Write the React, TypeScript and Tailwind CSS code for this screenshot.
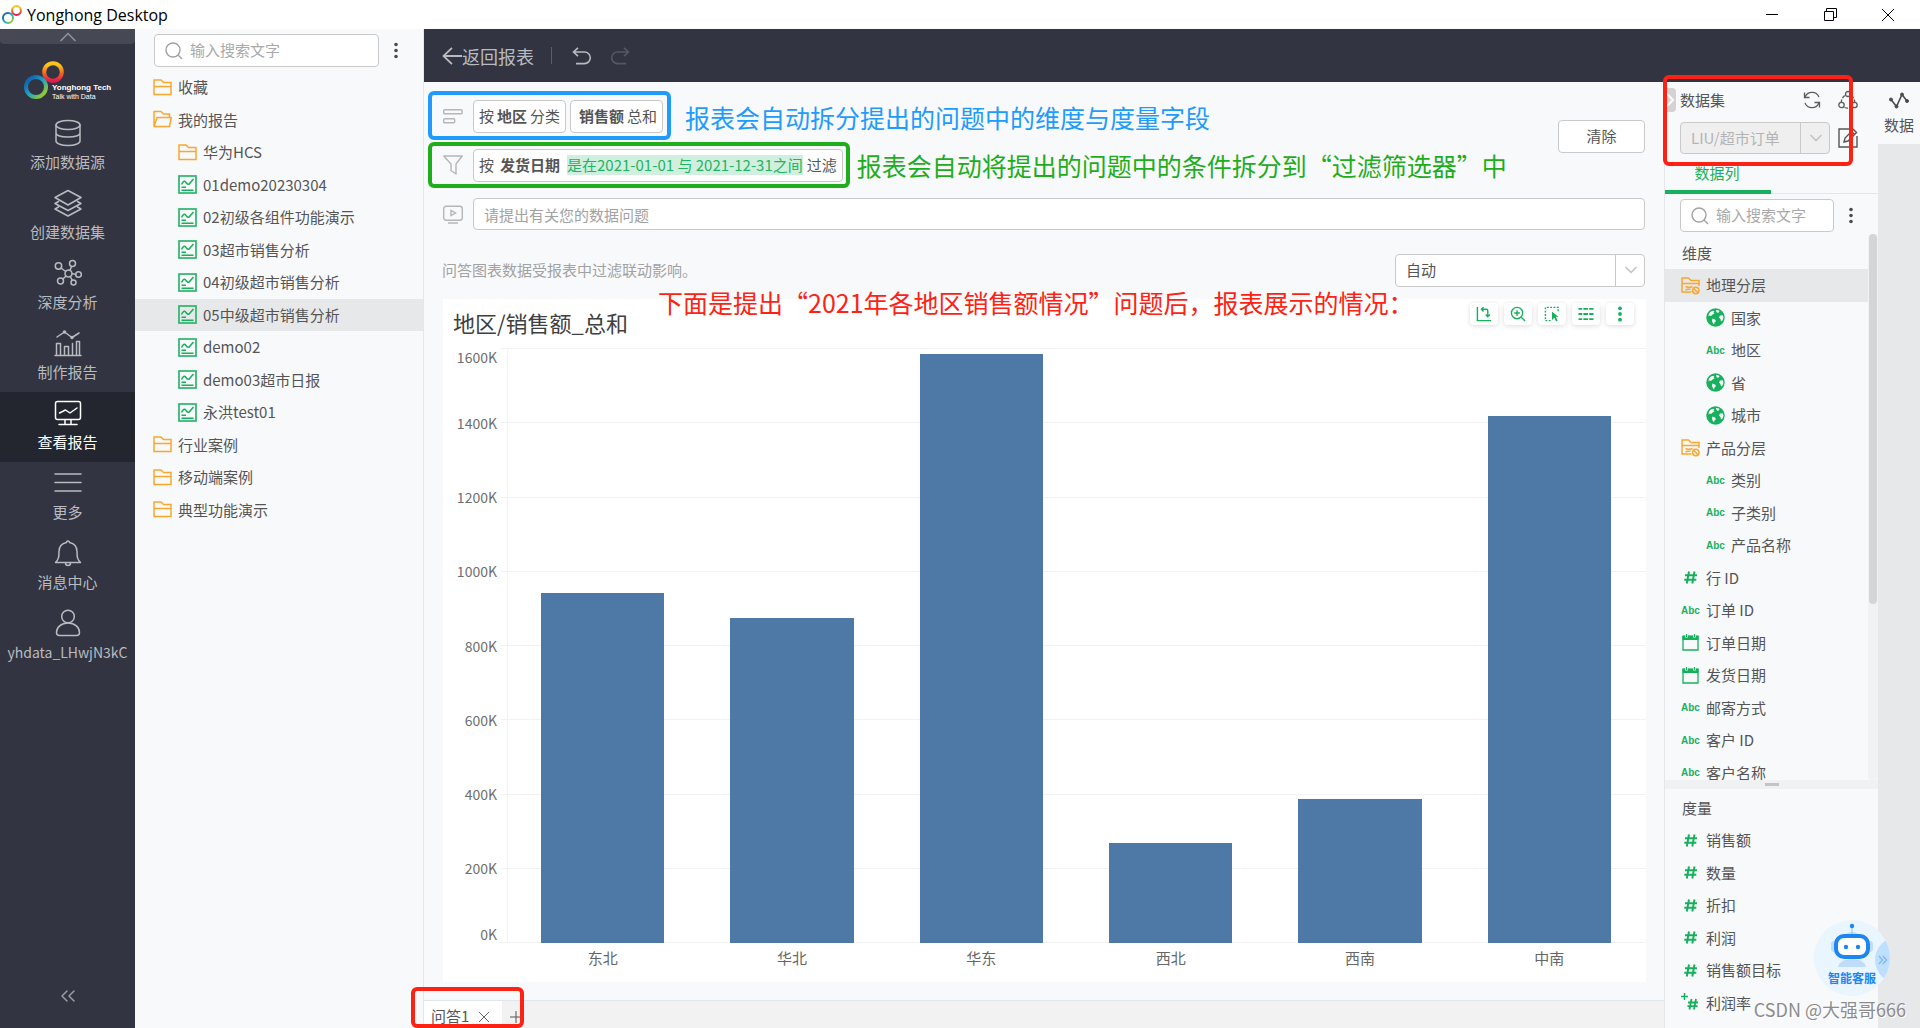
import type { ReactNode } from "react";
import { ChevronDown, ChevronsLeft, ChevronUp } from "lucide-react";

type Kind = "folder" | "folder-open" | "report" | "level" | "globe" | "abc" | "number" | "date" | "calc";

type Item = { label: string; kind: Kind; child?: boolean; active?: boolean };

const REPORTS: Item[] = [
  { label: "收藏", kind: "folder" },
  { label: "我的报告", kind: "folder-open" },
  { label: "华为HCS", kind: "folder", child: true },
  { label: "01demo20230304", kind: "report", child: true },
  { label: "02初级各组件功能演示", kind: "report", child: true },
  { label: "03超市销售分析", kind: "report", child: true },
  { label: "04初级超市销售分析", kind: "report", child: true },
  { label: "05中级超市销售分析", kind: "report", child: true, active: true },
  { label: "demo02", kind: "report", child: true },
  { label: "demo03超市日报", kind: "report", child: true },
  { label: "永洪test01", kind: "report", child: true },
  { label: "行业案例", kind: "folder" },
  { label: "移动端案例", kind: "folder" },
  { label: "典型功能演示", kind: "folder" },
];

const DIMENSIONS: Item[] = [
  { label: "地理分层", kind: "level", active: true },
  { label: "国家", kind: "globe", child: true },
  { label: "地区", kind: "abc", child: true },
  { label: "省", kind: "globe", child: true },
  { label: "城市", kind: "globe", child: true },
  { label: "产品分层", kind: "level" },
  { label: "类别", kind: "abc", child: true },
  { label: "子类别", kind: "abc", child: true },
  { label: "产品名称", kind: "abc", child: true },
  { label: "行 ID", kind: "number" },
  { label: "订单 ID", kind: "abc" },
  { label: "订单日期", kind: "date" },
  { label: "发货日期", kind: "date" },
  { label: "邮寄方式", kind: "abc" },
  { label: "客户 ID", kind: "abc" },
  { label: "客户名称", kind: "abc" },
];

const MEASURES: Item[] = [
  { label: "销售额", kind: "number" },
  { label: "数量", kind: "number" },
  { label: "折扣", kind: "number" },
  { label: "利润", kind: "number" },
  { label: "销售额目标", kind: "number" },
  { label: "利润率", kind: "calc" },
];

// sales per region, in thousands
const SALES = [
  { region: "东北", value: 942 },
  { region: "华北", value: 875 },
  { region: "华东", value: 1584 },
  { region: "西北", value: 270 },
  { region: "西南", value: 386 },
  { region: "中南", value: 1417 },
];
const AXIS_MAX = 1600;
const TICKS = [1600, 1400, 1200, 1000, 800, 600, 400, 200, 0];

function NavSvg({ children }: { children: ReactNode }) {
  return (
    <svg viewBox="0 0 28 28" className="w-7 h-7" fill="none" stroke="currentColor" strokeWidth="1.5" strokeLinejoin="round" strokeLinecap="round">
      {children}
    </svg>
  );
}

const NAV: { label: string; small?: boolean; active?: boolean; icon: ReactNode }[] = [
  {
    label: "添加数据源",
    icon: (
      <>
        <ellipse cx="14" cy="6" rx="12" ry="4.5" />
        <path d="M2 6v16c0 2.5 5.4 4.5 12 4.5s12-2 12-4.5V6M2 14c0 2.5 5.4 4 12 4s12-1.5 12-4" />
      </>
    ),
  },
  {
    label: "创建数据集",
    icon: (
      <path d="M14 1.5 27 8.500 14 16 1 8.500ZM4.500 12.500 1 14.500 14 21.500 27 14.500 23.500 12.500M4.500 18 1 20 14 27 27 20 23.500 18" />
    ),
  },
  {
    label: "深度分析",
    icon: (
      <>
        <circle cx="14.5" cy="14.5" r="3.5" />
        <circle cx="4.5" cy="7" r="3.2" />
        <circle cx="18.5" cy="4.5" r="3" />
        <circle cx="24.5" cy="15.5" r="2.8" />
        <circle cx="6.5" cy="22" r="3" />
        <circle cx="19.5" cy="23.5" r="2.5" />
        <path d="m7 9 4.7 3.5M17.5 7.500l-1.500 4M18 14.700l3.700.5M9 20l3-3M18.300 21.300l-2-3.800" />
      </>
    ),
  },
  {
    label: "制作报告",
    icon: (
      <>
        <path d="M1 26.500h26M2.500 26V14.500h4V26M10.500 26V17.500h4V26M18.500 26V14.500M22.500 26V12.500h3V26" />
        <path d="m3 8 7.500-5L18 8.500 25 4" />
        <circle cx="10.5" cy="3" r="1" />
        <circle cx="18" cy="8.5" r="1" />
      </>
    ),
  },
  {
    label: "查看报告",
    active: true,
    icon: (
      <>
        <rect x="1.5" y="2.5" width="25" height="18" rx="2" />
        <path d="m5.500 14 6-3 4.500 3 7-5M11 21v4M17 21v4M5 25.500h18" />
      </>
    ),
  },
  { label: "更多", icon: <path d="M1 5h26M1 13.500h26M1 22h26" /> },
  {
    label: "消息中心",
    icon: (
      <path d="M12.500 3.500a1.500 1.500 0 0 1 3 0c4.500 1 7.500 4.500 7.500 9 0 6 .5 8 3.500 11h-25C4.500 20.500 5 18.500 5 12.500c0-4.500 3-8 7.500-9ZM11.500 24a2.500 2.500 0 0 0 5 0" />
    ),
  },
  {
    label: "yhdata_LHwjN3kC",
    small: true,
    icon: (
      <>
        <circle cx="14" cy="7.5" r="6.3" />
        <path d="M2.500 23.500c0-5 4.500-9.500 11.500-9.500s11.500 4.500 11.500 9.500c0 2-1 3-3 3h-17c-2 0-3-1-3-3Z" />
      </>
    ),
  },
];

function KindIcon({ kind }: { kind: Kind }) {
  if (kind === "abc") {
    return <span className="w-[19px] shrink-0 font-[Liberation_Sans] text-[10px] font-bold text-[#17b05d]">Abc</span>;
  }
  return (
    <svg viewBox="0 0 19 19" className="w-[19px] h-[19px] shrink-0" fill="none" strokeWidth="1.5">
      {kind === "folder" && <path stroke="#fba62e" d="M1 16.500V2h7l2.500 2.500H18v12ZM1 8.500h17" />}
      {kind === "folder-open" && (
        <path stroke="#fba62e" strokeLinejoin="round" d="M1 16.500V1.500h7L10.500 4H16.500v3.500M1 16.500 4 7.500h14.200L16.500 16.500Z" />
      )}
      {kind === "report" && (
        <>
          <rect x="1" y="1" width="17" height="17" stroke="#2cb56b" strokeWidth="1.7" />
          <path stroke="#17b05d" d="M3.500 9.500C5 6 6.500 5.500 8 7.500s2.800 2.500 4 .5L15.500 4M3.500 12.300H8M3.500 15.200h12" />
        </>
      )}
      {kind === "level" && (
        <>
          <path stroke="#fba62e" d="M10.500 16H1V2h6.500l2.500 2.500h8V10M1 7.500h17M4.500 10.500l2 .8h3l2-.8M4.500 14l2-.8h3" />
          <circle cx="14.8" cy="14.5" r="3.2" stroke="#fba62e" />
          <path stroke="#fba62e" d="m12.500 12.300 4.500 4.500" />
        </>
      )}
      {kind === "globe" && (
        <>
          <circle cx="9.5" cy="9.5" r="9.2" fill="#17b05d" />
          <path
            fill="#f8f9fb"
            d="M4.500 3.800 7 2.800 8.500 3.300 7.500 4.500 8.500 5.500 6.500 6.500 5 8 3.500 7.500 2.500 8.500 2.800 6ZM10 2 12.500 2.300 13.500 3.500 12 5 10.500 4ZM6.500 10.500 9 11.500 10 13 8.500 14.500 8 16.500 6.500 14.500 6 12.500ZM14 7.500 16.800 7.200 17.500 9.500 16.500 12.500 15 13.500 14.500 11 13 9.500Z"
          />
        </>
      )}
      {kind === "number" && (
        <path stroke="#17b05d" strokeWidth="2" d="M8 3.500 5.800 15.500M13.500 3.500l-2.200 12M4 7.200h12M3.300 11.800h12" />
      )}
      {kind === "date" && (
        <>
          <path stroke="#17b05d" strokeWidth="1.3" d="M2 3.500h15V17H2Z" />
          <path fill="#17b05d" d="M1.500 2.500h16V7h-16Z" />
          <path stroke="#f8f9fb" strokeWidth="2.6" d="M5.500 1v3.500M13.500 1v3.500" />
          <path stroke="#17b05d" strokeWidth="1.2" d="M5.500 1v3M13.500 1v3" />
        </>
      )}
      {kind === "calc" && (
        <>
          <path stroke="#17b05d" d="M3.500 0v7M0 3.500h7" />
          <path stroke="#17b05d" strokeWidth="1.8" d="M10.500 6 8.500 16.500M15 6l-2 10.500M7 9.500h10M6.500 13.200h10" />
        </>
      )}
    </svg>
  );
}

// The left padding comes from the list, so both side panels can share the row.
function Row({ item, indent }: { item: Item; indent: string }) {
  return (
    <li className={item.active ? "bg-[#e7e8ea]" : ""}>
      <a href="#" className={`flex h-full items-center whitespace-nowrap ${indent}`}>
        {item.child && <span className="w-[25px]" />}
        <KindIcon kind={item.kind} />
        <span className="ml-[6px]">{item.label}</span>
      </a>
    </li>
  );
}

function SearchBox({ className }: { className: string }) {
  return (
    <label className={`flex h-[33px] items-center gap-[7px] rounded-sm border border-[#c9c9c9] bg-white pl-[10px] ${className}`}>
      <svg viewBox="0 0 18 18" className="w-[18px] h-[18px] shrink-0" fill="none" stroke="#a2a2a2" strokeWidth="1.4">
        <circle cx="8" cy="8" r="7" />
        <path d="m13 13 4 4" />
      </svg>
      <input aria-label="搜索" placeholder="输入搜索文字" className="w-full min-w-0 bg-transparent outline-none placeholder:text-[#a9a9a9]" />
    </label>
  );
}

function MoreDots() {
  return (
    <button aria-label="更多操作" className="flex w-4 shrink-0 justify-center">
      <svg viewBox="0 0 4 17" className="w-1 h-[17px]" fill="#4c4c4c">
        <circle cx="2" cy="2.5" r="1.8" />
        <circle cx="2" cy="8.5" r="1.8" />
        <circle cx="2" cy="14.5" r="1.8" />
      </svg>
    </button>
  );
}

function SelectArrow() {
  return (
    <span className="pointer-events-none absolute inset-y-0 right-0 flex w-[30px] items-center justify-center border-l border-[#c9c9c9] text-[#c4c4c4]">
      <ChevronDown className="h-5 w-5" strokeWidth={2} />
    </span>
  );
}

function Rings({ id, className }: { id: string; className: string }) {
  return (
    <svg viewBox="0 0 40 40" className={className} fill="none">
      <defs>
        <linearGradient id={`${id}-cool`} x1="0" y1="0" x2="1" y2="1">
          <stop offset="0.15" stopColor="#1468b0" />
          <stop offset="0.5" stopColor="#1ba3c6" />
          <stop offset="0.85" stopColor="#8cc63f" />
        </linearGradient>
        <linearGradient id={`${id}-warm`} x1="0" y1="0" x2="0" y2="1">
          <stop offset="0.1" stopColor="#fbc41b" />
          <stop offset="0.55" stopColor="#f26a21" />
          <stop offset="1" stopColor="#e6194b" />
        </linearGradient>
      </defs>
      <circle cx="29" cy="11" r="8.8" stroke={`url(#${id}-warm)`} strokeWidth="4" />
      <circle cx="12" cy="26" r="10" stroke={`url(#${id}-cool)`} strokeWidth="4" />
    </svg>
  );
}

function TitleBar() {
  return (
    <header className="flex h-[29px] shrink-0 items-center bg-white text-black">
      <Rings id="app" className="ml-0.5 h-5 w-5" />
      <h1 className="ml-[5px] flex-1 font-[Open_Sans] text-[16px]">Yonghong Desktop</h1>
      <div className="flex pr-[3px]">
        <button aria-label="最小化" className="flex h-[29px] w-[58px] items-center justify-center">
          <svg viewBox="0 0 12 12" className="h-3 w-3" stroke="currentColor"><path d="M0 5.500h12" /></svg>
        </button>
        <button aria-label="还原" className="flex h-[29px] w-[58px] items-center justify-center">
          <svg viewBox="0 0 13 13" className="h-[13px] w-[13px]" fill="none" stroke="currentColor"><path d="M.5 3.500h9v9h-9ZM2.500 3V.5h10v9H10" /></svg>
        </button>
        <button aria-label="关闭" className="flex h-[29px] w-[58px] items-center justify-center">
          <svg viewBox="0 0 12 12" className="h-3 w-3" stroke="currentColor"><path d="m0 0 12 12M12 0 0 12" /></svg>
        </button>
      </div>
    </header>
  );
}

function NavRail() {
  return (
    <nav className="flex w-[135px] shrink-0 flex-col bg-[#323541] text-[#b9bbc0]">
      <button aria-label="收起顶部" className="flex h-[15px] items-center justify-center rounded-b-sm bg-[#464954] text-[#8d8f96]">
        <ChevronUp className="h-7 w-7 shrink-0" strokeWidth={1.5} />
      </button>
      <div className="flex h-[68px] pl-6 pt-[17px]">
        <Rings id="brand" className="h-10 w-10 shrink-0" />
        <div className="-ml-3 pt-[22px] font-[Liberation_Sans] text-white">
          <div className="whitespace-nowrap text-[8px] font-bold leading-[10px]">Yonghong Tech</div>
          <div className="whitespace-nowrap text-[7px] leading-[8px]">Talk with Data</div>
        </div>
      </div>
      {NAV.map((n) => (
        <a
          key={n.label}
          href="#"
          className={`flex h-[70px] flex-col items-center gap-1 pt-[7px] leading-[22px] ${n.active ? "bg-[#24262f] text-white" : ""}`}
        >
          <NavSvg>{n.icon}</NavSvg>
          <span className={n.small ? "text-[14px]" : ""}>{n.label}</span>
        </a>
      ))}
      <button aria-label="收起菜单" className="mx-auto mt-auto mb-5 text-[#9a9ca3]">
        <ChevronsLeft className="h-6 w-6" strokeWidth={1.5} />
      </button>
    </nav>
  );
}

function ReportTree() {
  return (
    <aside className="w-[289px] shrink-0 border-r border-[#e4e6ea]">
      <div className="flex items-center gap-[9px] pl-[19px] pt-[5px]">
        <SearchBox className="w-[225px]" />
        <MoreDots />
      </div>
      <ul className="mt-1 grid h-[455px] auto-rows-fr">
        {REPORTS.map((r) => (
          <Row key={r.label} item={r} indent="pl-[18px]" />
        ))}
      </ul>
    </aside>
  );
}

function TopBar() {
  return (
    <div className="flex h-[53px] shrink-0 items-center bg-[#323541] pl-[18px] text-[#b9bbc0]">
      <a href="#" className="flex items-center text-[18px] leading-[26px]">
        <svg viewBox="0 0 20 18" className="h-[18px] w-5" fill="none" stroke="currentColor" strokeWidth="1.8"><path d="M20 9H2M10 .8 1.500 9l8.500 8.200" /></svg>
        返回报表
      </a>
      <span className="mx-[17px] h-[17px] w-px bg-[#5b5e68]" />
      <button aria-label="撤销" className="ml-[3px]">
        <svg viewBox="0 0 20 18" className="h-[18px] w-5" fill="none" stroke="currentColor" strokeWidth="1.6"><path d="M6 .8 1.500 5 6 9.200M2 5h10.500a5.800 5.800 0 0 1 0 11.600H4" /></svg>
      </button>
      <button aria-label="重做" disabled className="ml-[18px] text-[#555863]">
        <svg viewBox="0 0 20 18" className="h-[18px] w-5" fill="none" stroke="currentColor" strokeWidth="1.6"><path d="M14 .8 18.500 5 14 9.200M18 5H7.500a5.800 5.800 0 0 0 0 11.600H16" /></svg>
      </button>
    </div>
  );
}

function Question() {
  return (
    <div className="pl-1 pr-[19px] pt-[9px]">
      <div className="flex">
        <div className="flex-1">
          <div className="flex items-center gap-[14px]">
            <div className="flex h-[49px] shrink-0 items-center rounded-md border-4 border-[#1e9bfb] pl-[11px] pr-1 pt-[2px]">
              <svg viewBox="0 0 20 15" className="h-[15px] w-5" fill="none" stroke="#b4b6ba" strokeWidth="1.4">
                <rect x=".7" y=".7" width="18.5" height="4" rx="1" />
                <rect x=".7" y="9.700" width="11" height="4" rx="1" />
              </svg>
              <button className="ml-[10px] flex h-[33px] items-center gap-[3px] rounded-sm border border-[#c9c9c9] bg-white px-[5px]">
                按<b>地区</b>分类
              </button>
              <button className="ml-1 flex h-[33px] items-center gap-[3px] rounded-sm border border-[#c9c9c9] bg-white pl-2 pr-[5px]">
                <b>销售额</b>总和
              </button>
            </div>
            <p className="pt-[2px] text-[25px] leading-8 text-[#1e9bfb]">报表会自动拆分提出的问题中的维度与度量字段</p>
          </div>
          <div className="mt-[2px] flex items-center gap-[7px]">
            <div className="flex h-[46px] shrink-0 items-center rounded-md border-4 border-[#1fad1c] pl-[11px] pr-[3px]">
              <svg viewBox="0 0 20 20" className="h-5 w-5" fill="none" stroke="#b4b6ba" strokeWidth="1.4" strokeLinejoin="round">
                <path d="M.8 1h18.400L13 9v10l-5-3.500V9Z" />
              </svg>
              <button className="ml-[10px] flex h-[33px] items-center rounded-sm border border-[#c9c9c9] bg-white px-[5px]">
                按<b className="ml-[6px]">发货日期</b>
                <span className="ml-[7px] bg-[#d1efdf] leading-5 text-[#1fb463]">是在2021-01-01 与 2021-12-31之间</span>
                <span className="ml-1">过滤</span>
              </button>
            </div>
            <p className="whitespace-nowrap text-[25px] leading-8 text-[#1fad1c]">报表会自动将提出的问题中的条件拆分到“过滤筛选器”中</p>
          </div>
        </div>
        <button className="mt-[29px] h-[33px] w-[87px] shrink-0 rounded-sm border border-[#c9c9c9] bg-white">清除</button>
      </div>
      <label className="mt-[10px] flex items-center gap-[10px] pl-[15px]">
        <svg viewBox="0 0 20 19" className="h-[19px] w-5 shrink-0" fill="none" stroke="#b4b6ba" strokeWidth="1.4">
          <rect x=".7" y="1.200" width="18.6" height="14" rx="2.5" />
          <path d="M5 18h10M8 5.500v5l4.500-2.500Z" />
        </svg>
        <input
          aria-label="数据问题"
          placeholder="请提出有关您的数据问题"
          className="h-8 flex-1 rounded-sm border border-[#c9c9c9] bg-white pl-[10px] outline-none placeholder:text-[#a2a2a2]"
        />
      </label>
    </div>
  );
}

const TOOLS: { label: string; icon: ReactNode }[] = [
  { label: "交换坐标轴", icon: <path d="M1.500 1v14.500H16M6 3.500h5q1.500 0 1.500 1.500v6M8 1.200 5.800 3.500 8 5.800M10.300 9l2.200 2.300L14.700 9" /> },
  {
    label: "放大",
    icon: (
      <>
        <circle cx="7.5" cy="7.5" r="6" />
        <path d="m12 12 4 4M7.500 4.500v6M4.500 7.500h6" />
      </>
    ),
  },
  {
    label: "框选",
    icon: (
      <>
        <path strokeDasharray="2 1.5" d="M7 15.500H1.500v-14h13.500V7" />
        <path fill="currentColor" stroke="none" d="M8.500 6 15.500 11.500H12.500L14.500 15.500 12.800 16.500 11 12.500 8.500 15Z" />
      </>
    ),
  },
  { label: "明细", icon: <path strokeWidth="2" strokeDasharray="4 1.2 5 1.2 5 9" d="M.5 3h16M.5 8.500h16M.5 14h16" /> },
  {
    label: "更多",
    icon: (
      <g fill="currentColor" stroke="none">
        <circle cx="8.5" cy="2.5" r="2" />
        <circle cx="8.5" cy="8.5" r="2" />
        <circle cx="8.5" cy="14.5" r="2" />
      </g>
    ),
  },
];

function ChartCard() {
  return (
    <section className="relative ml-[19px] mr-[18px] mb-[18px] flex flex-1 flex-col bg-white">
      <div className="flex h-[49px] shrink-0 items-start justify-between pl-[10px] pr-3">
        <h2 className="text-[22px] leading-[46px] text-[#404040]">地区/销售额_总和</h2>
        <div className="flex gap-[6px] pt-1">
          {TOOLS.map((t) => (
            <button key={t.label} aria-label={t.label} className="flex h-[22px] w-7 items-center justify-center rounded bg-white text-[#17b05d] shadow-[0_1px_5px_rgba(0,0,0,0.14)]">
              <svg viewBox="0 0 17 17" className="h-4 w-4" fill="none" stroke="currentColor" strokeWidth="1.5">
                {t.icon}
              </svg>
            </button>
          ))}
        </div>
      </div>
      <p className="absolute left-[215px] -top-[13px] whitespace-nowrap text-[25px] leading-8 text-[#fd2213]">
        下面是提出“2021年各地区销售额情况”问题后，报表展示的情况：
      </p>

      <div className="flex flex-1">
        {/* end labels stay inside the plot, the rest sit on their grid line */}
        <div className="flex w-[57px] flex-col justify-between pr-[3px] text-[14px] leading-[18px] text-[#6f6f6f]">
          {TICKS.map((t) => (
            <span
              key={t}
              className={`flex h-px justify-end ${t === AXIS_MAX ? "items-start" : t === 0 ? "items-end" : "items-center"}`}
            >
              {t}K
            </span>
          ))}
        </div>
        <div className="relative flex-1 pl-[7px] pr-[2px]">
          <div className="absolute inset-0 flex flex-col justify-between">
            {TICKS.map((t) => (
              <div key={t} className="h-px bg-[#f2f2f2]" />
            ))}
          </div>
          <div className="relative grid h-full grid-cols-6 items-end justify-items-center border-l border-[#f2f2f2]">
            {SALES.map((s) => (
              <div
                key={s.region}
                title={`${s.region} ${s.value}K`}
                className="w-[65%] bg-[#4e79a7]"
                style={{ height: `${(s.value / AXIS_MAX) * 100}%` }}
              />
            ))}
          </div>
        </div>
      </div>
      <div className="grid h-[39px] shrink-0 grid-cols-6 pl-[65px] pr-[2px] pt-1 text-center leading-[22px] text-[#666]">
        {SALES.map((s) => (
          <span key={s.region}>{s.region}</span>
        ))}
      </div>
    </section>
  );
}

function AnswerTabs() {
  return (
    <div className="relative flex h-7 shrink-0 border-t border-[#e1e5ec] bg-[#f2f2f2]">
      <div className="flex w-[78px] items-center gap-[10px] bg-white pl-[7px] pt-1">
        <button className="whitespace-nowrap">问答1</button>
        <button aria-label="关闭问答1">
          <svg viewBox="0 0 10 10" className="h-[10px] w-[10px]" stroke="#666"><path d="m0 0 10 10M10 0 0 10" /></svg>
        </button>
      </div>
      <button aria-label="新增问答" className="ml-2 pt-1">
        <svg viewBox="0 0 12 12" className="h-3 w-3" stroke="#555"><path d="M6 0v12M0 6h12" /></svg>
      </button>
      <div className="pointer-events-none absolute -left-[13px] -top-[14px] h-[41px] w-[113px] rounded-md border-4 border-[#fd2213]" />
    </div>
  );
}

function Workspace() {
  return (
    <main className="flex min-w-0 flex-1 flex-col">
      <Question />
      <div className="flex h-[69px] items-center justify-between pb-px pl-[18px] pr-[19px] pt-[12px]">
        <span className="text-[#a2a2a2]">问答图表数据受报表中过滤联动影响。</span>
        <label className="relative">
          <select aria-label="图表类型" className="h-[33px] w-[250px] appearance-none rounded-sm border border-[#c9c9c9] bg-white pl-[10px] outline-none">
            <option>自动</option>
          </select>
          <SelectArrow />
        </label>
      </div>
      <ChartCard />
      <AnswerTabs />
    </main>
  );
}

function DataPanel() {
  return (
    <aside className="relative flex w-[214px] shrink-0 flex-col border-l border-[#e4e6ea]">
      <div className="flex h-9 items-center pr-5">
        <button aria-label="收起面板" className="mr-1 flex h-6 w-[11px] items-center justify-end rounded-r-sm bg-[#d3d3d3] pr-[2px] text-white">
          <svg viewBox="0 0 8 14" className="h-[14px] w-2" fill="none" stroke="currentColor" strokeWidth="2"><path d="m1 1 6 6-6 6" /></svg>
        </button>
        <span className="flex-1">数据集</span>
        <button aria-label="刷新">
          <svg viewBox="0 0 18 18" className="h-[18px] w-[18px]" fill="none" stroke="#5c5c5c" strokeWidth="1.3"><path d="M1.500 1.500v5h5M2 6.200A7.500 7.500 0 0 1 16 6M16.500 16.500v-5h-5M16 11.800A7.500 7.500 0 0 1 2 12" /></svg>
        </button>
        <button aria-label="关联" className="ml-[17px]">
          <svg viewBox="0 0 20 20" className="h-5 w-5" fill="none" stroke="#5c5c5c" strokeWidth="1.3">
            <circle cx="10" cy="4" r="2.5" />
            <circle cx="3.5" cy="15" r="2.7" />
            <circle cx="16.5" cy="15" r="2.7" />
            <path strokeDasharray="3.5 1.5" d="M6.800 5.500Q3.500 8 3.300 12M13.200 5.500q3.300 2.500 3.500 6.500M6.500 17.500q3.500 1.500 7 0" />
          </svg>
        </button>
      </div>
      <div className="flex items-center justify-between pl-[15px] pr-5 pt-1">
        <label className="relative">
          <select aria-label="数据集" disabled className="h-8 w-[150px] appearance-none rounded-sm border border-[#c9c9c9] bg-[#efefef] pl-[10px] text-[#b4b4b4] opacity-100">
            <option>LIU/超市订单</option>
          </select>
          <SelectArrow />
        </label>
        <button aria-label="编辑">
          <svg viewBox="0 0 20 20" className="h-5 w-5" fill="none" stroke="#555" strokeWidth="1.4">
            <path d="M12 1H1v18h18V8" />
            <path d="m6 14 1-4 8.500-8.500 3 3L10 13ZM13.500 3.500l3 3" />
          </svg>
        </button>
      </div>
      <div className="flex h-10 items-end border-b border-[#e4e6ea] text-[#17b05d]">
        <button className="-mb-px h-8 w-[106px] border-b-4 border-[#17b05d] pb-[7px] pr-[2px] leading-[22px]">数据列</button>
      </div>
      <div className="flex items-center gap-[9px] pl-[15px] pt-[5px]">
        <SearchBox className="w-[154px]" />
        <MoreDots />
      </div>
      <div className="mt-[2px] flex h-[546px] shrink-0">
        <div className="flex-1 overflow-hidden">
          <h3 className="flex h-[35px] items-center pl-[17px] pt-1">维度</h3>
          <ul className="grid h-[520px] auto-rows-fr">
            {DIMENSIONS.map((d) => (
              <Row key={d.label} item={d} indent="pl-4" />
            ))}
          </ul>
        </div>
        <div className="w-[10px] rounded bg-[#f1f2f4] px-px">
          <div className="h-[370px] rounded bg-[#d4d5d7]" />
        </div>
      </div>
      <div className="flex h-[9px] shrink-0 items-center justify-center bg-[#f0f1f3]">
        <span className="h-[3px] w-[14px] bg-[#c4c4c6]" />
      </div>
      <h3 className="flex h-[35px] shrink-0 items-center pl-[17px] pt-1">度量</h3>
      <ul className="grid h-[195px] shrink-0 auto-rows-fr">
        {MEASURES.map((m) => (
          <Row key={m.label} item={m} indent="pl-4" />
        ))}
      </ul>
      <div className="pointer-events-none absolute -left-[2px] -top-[7px] h-[91px] w-[190px] rounded-md border-4 border-[#fd2213]" />
    </aside>
  );
}

function SideTabs() {
  return (
    <div className="w-[42px] shrink-0 bg-[#e7e8ea]">
      <button className="flex h-[62px] w-full flex-col items-center gap-[5px] bg-[#f8f9fb] pt-[10px] leading-[22px]">
        <svg viewBox="0 0 20 17" className="h-[17px] w-5 shrink-0" fill="#4c4c4c" stroke="#4c4c4c">
          <path fill="none" strokeWidth="1.6" d="m2 7.500 5.500 7L13 2.500l5 6.500" />
          <circle cx="2" cy="7.5" r="1.5" />
          <circle cx="7.5" cy="14.5" r="1.5" />
          <circle cx="13" cy="2.5" r="1.5" />
          <circle cx="18" cy="9" r="1.5" />
        </svg>
        数据
      </button>
    </div>
  );
}

function SupportBadge() {
  return (
    <button className="absolute bottom-[32px] right-[30px] h-[76px] w-[76px] overflow-hidden rounded-full bg-[#e9f5ff] text-[12px] font-bold text-[#1d86f0]">
      <svg viewBox="0 0 76 76" className="absolute inset-0 h-full w-full">
        <circle cx="84" cy="40" r="23" fill="#bfdfff" />
        <path d="m65 36 3.500 4-3.500 4M69 36l3.500 4-3.500 4" fill="none" stroke="#7fb8f5" strokeWidth="1.3" />
        <path d="M24 47q2-8 14-8t14 8Z" fill="#bfdcfb" />
        <path d="M31 16q1-4 7-4t7 4Z" fill="#bfdcfb" />
        <rect x="17" y="21" width="42" height="11" rx="3" fill="#bfdcfb" />
        <path d="M38 6v8" stroke="#8cc0f8" />
        <circle cx="38" cy="6" r="2.2" fill="#1d86f0" />
        <rect x="22" y="16" width="32" height="21" rx="8" fill="#fff" stroke="#1d86f0" strokeWidth="4" />
        <circle cx="32" cy="27" r="2.2" fill="#1d86f0" />
        <circle cx="44" cy="27" r="2.2" fill="#1d86f0" />
      </svg>
      <span className="relative top-5">智能客服</span>
    </button>
  );
}

export default function App() {
  return (
    <div className="relative flex h-screen flex-col overflow-hidden bg-[#f8f9fb] font-['Noto_Sans_CJK_SC',sans-serif] text-[15px] text-[#555]">
      <TitleBar />
      <div className="flex min-h-0 flex-1">
        <NavRail />
        <ReportTree />
        <div className="flex min-w-0 flex-1 flex-col">
          <TopBar />
          <div className="flex min-h-0 flex-1">
            <Workspace />
            <DataPanel />
            <SideTabs />
          </div>
        </div>
      </div>
      <SupportBadge />
      <span className="pointer-events-none absolute bottom-[5px] right-[14px] text-[18px] leading-7 text-[#8c8c8c] [text-shadow:1px_1px_0_#fff]">
        CSDN @大强哥666
      </span>
    </div>
  );
}
